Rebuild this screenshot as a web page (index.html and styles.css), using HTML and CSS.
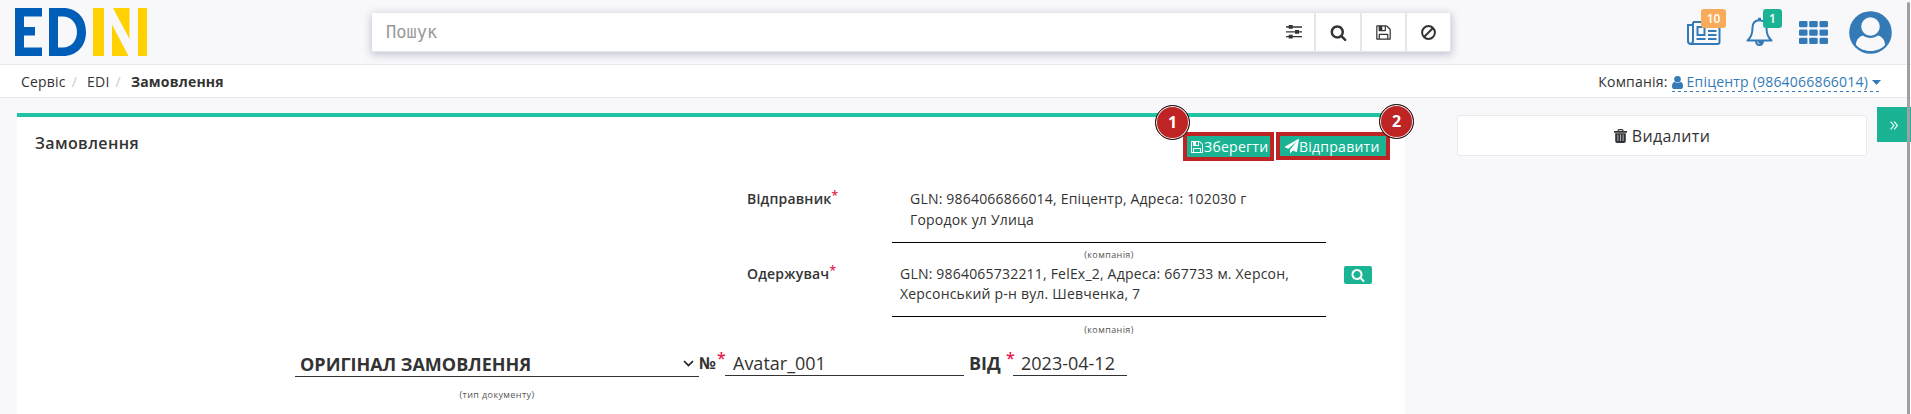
FILE: index.html
```html
<!DOCTYPE html>
<html lang="uk">
<head>
<meta charset="utf-8">
<title>Замовлення</title>
<link rel="stylesheet" href="styles.css">
</head>
<body>
<svg class="defs" aria-hidden="true">
  <symbol id="search" viewBox="0 0 1792 1792"><path d="M1216 832q0-185-131.500-316.500t-316.500-131.500-316.500 131.500-131.500 316.500 131.500 316.500 316.500 131.500 316.500-131.500 131.500-316.500zm512 832q0 52-38 90t-90 38q-54 0-90-38l-343-342q-179 124-399 124-143 0-273.500-55.500t-225-150-150-225-55.500-273.500 55.500-273.500 150-225 225-150 273.500-55.500 273.500 55.500 225 150 150 225 55.500 273.500q0 220-124 399l343 343q37 37 37 90z"/></symbol>
  <symbol id="save" viewBox="0 0 1792 1792"><path d="M512 1536h768v-384h-768v384zm896 0h128v-896q0-14-10-38.500t-20-34.500l-281-281q-10-10-34-20t-39-10v416q0 40-28 68t-68 28h-576q-40 0-68-28t-28-68v-416h-128v1280h128v-416q0-40 28-68t68-28h832q40 0 68 28t28 68v416zm-384-928v-320q0-13-9.500-22.500t-22.500-9.500h-192q-13 0-22.500 9.500t-9.500 22.500v320q0 13 9.500 22.500t22.500 9.500h192q13 0 22.500-9.500t9.500-22.500zm640 32v928q0 40-28 68t-68 28h-1344q-40 0-68-28t-28-68v-1344q0-40 28-68t68-28h928q40 0 88 20t76 48l280 280q28 28 48 76t20 88z"/></symbol>
</svg>
<header class="header">
  <svg class="logo" viewBox="0 0 132 48" role="img" aria-label="EDIN">
    <path fill="#005eb8" d="M0 0h27v8.500H9V19h11v8.500H9v12h18V48H0z"/>
    <path fill="#005eb8" fill-rule="evenodd" d="M34 0h14c14 0 23 10 23 24s-9 24-23 24H34zM43 8.500v31h5c8 0 14-6.500 14-15.500S56 8.500 48 8.500z"/>
    <path fill="#ffd100" d="M78 0h11v48H78zM98 0h16.500v31zM97 16.500L113.500 48H97zM123 0h9v48h-9z"/>
  </svg>
  <div class="search">
    <span class="search-hint">Пошук</span>
    <span class="search-opts"><svg width="16" height="14" viewBox="0 0 16 14"><path d="M0 2h16M0 6.800h16M0 11.600h16" stroke="#333" stroke-width="1.300"/><path d="M2.700 0h4v3.800h-4zM9 4.900h4v3.800H9zM2.700 9.700h4v3.800h-4z" fill="#333"/></svg></span>
    <span class="search-btn b1"><svg class="ic17"><use href="#search"/></svg></span>
    <span class="search-btn b2"><svg class="ic17"><use href="#save"/></svg></span>
    <span class="search-btn b3"><svg width="15" height="15" viewBox="0 0 15 15" fill="none" stroke="#333" stroke-width="2"><circle cx="7.500" cy="7.500" r="6.400"/><path d="M3 12L12 3"/></svg></span>
  </div>
  <nav class="tools">
    <span class="tool news">
      <svg width="34" height="24" viewBox="0 0 34 24" fill="none" stroke="#337ab7" stroke-width="2"><path d="M6 1h26.500v20q0 2-2 2H4q-3 0-3-3V4h4.500"/><path d="M6 1v19q0 2.500-2.300 2.500"/><path d="M10.500 6h7v8h-7zM9.500 18h9M21 10h8.500M21 14h8.500M21 18h8.500"/></svg>
      <b class="badge orange">10</b>
    </span>
    <span class="tool bell">
      <svg width="27" height="30" viewBox="0 0 27 30"><path d="M13.500 3.200c-4.800 0-7 3.300-7 7.600 0 6.700-2 10.200-5 12.700h24c-3-2.500-5-6-5-12.700 0-4.300-2.200-7.600-7-7.600z" fill="none" stroke="#337ab7" stroke-width="2" stroke-linejoin="round"/><path d="M12 .8h3v2.400h-3zM9 24h9q-.3 5-4.500 5T9 24z" fill="#337ab7"/><path d="M11.400 24.500q.2 2.200 2.200 2.300" fill="none" stroke="#f8f8fb" stroke-width=".8"/></svg>
      <b class="badge green">1</b>
    </span>
    <svg class="grid" width="29" height="23" viewBox="0 0 29 23" fill="#337ab7"><rect width="8.500" height="6.300" rx="1.300"/><rect x="10.200" width="8.500" height="6.300" rx="1.300"/><rect x="20.500" width="8.500" height="6.300" rx="1.300"/><rect y="8.400" width="8.500" height="6.300" rx="1.300"/><rect x="10.200" y="8.400" width="8.500" height="6.300" rx="1.300"/><rect x="20.500" y="8.400" width="8.500" height="6.300" rx="1.300"/><rect y="16.700" width="8.500" height="6.300" rx="1.300"/><rect x="10.200" y="16.700" width="8.500" height="6.300" rx="1.300"/><rect x="20.500" y="16.700" width="8.500" height="6.300" rx="1.300"/></svg>
    <svg class="avatar" width="43" height="43" viewBox="0 0 43 43"><circle cx="21.500" cy="21.500" r="21.300" fill="#337ab7"/><path d="M14 24.500c-4 1-7 4.500-7 9.500 3.200 3.700 8.500 6 14.500 6s11.300-2.300 14.500-6c0-5-3-8.500-7-9.500-2 1.500-4.700 2.400-7.500 2.400s-5.500-.9-7.500-2.400z" fill="#f8f8fb"/><circle cx="21.500" cy="15.500" r="9.300" fill="#f8f8fb"/></svg>
  </nav>
</header>
<div class="crumbs">
  <span class="c1">Сервіс</span><i class="s1">/</i><span class="c2">EDI</span><i class="s2">/</i><b class="c3">Замовлення</b>
  <div class="company"><span>Компанія:</span>
    <a class="company-link"><svg width="11" height="13" viewBox="256 128 1280 1536" preserveAspectRatio="none" fill="#337ab7"><path d="M1536 1399q0 109-62.500 187t-150.500 78h-854q-88 0-150.500-78t-62.500-187q0-85 8.500-160.500t31.500-152 58.500-131 94-89 134.500-34.500q131 128 313 128t313-128q76 0 134.500 34.500t94 89 58.500 131 31.500 152 8.500 160.500z"/><circle cx="896" cy="512" r="384"/></svg><span class="company-name">Епіцентр (9864066866014)</span><svg class="caret" width="9" height="5" viewBox="0 0 9 5"><path d="M0 0h9L4.500 5z" fill="#337ab7"/></svg></a>
  </div>
</div>
<main class="main">
  <section class="card">
    <div class="card-head">
      <h1>Замовлення</h1>
      <div class="actions">
        <div class="action a1"><svg class="ic14"><use href="#save"/></svg><span>Зберегти</span><em class="mark m1">1</em></div>
        <div class="action a2"><svg width="14" height="14" viewBox="0 0 1792 1792" fill="#fff"><path d="M1764 11q33 24 27 64l-256 1536q-5 29-32 45-14 8-31 8-11 0-24-5l-453-185-242 295q-18 23-49 23-13 0-22-4-19-7-30.500-23.500t-11.500-36.500v-349l864-1059-1069 925-395-162q-37-14-40-55-2-40 32-59l1664-960q15-9 32-9 20 0 36 11z"/></svg><span>Відправити</span><em class="mark m2">2</em></div>
      </div>
    </div>
    <div class="party p1">
      <label>Відправник<sup>*</sup></label>
      <div class="party-field"><div class="party-text">GLN: 9864066866014, Епіцентр, Адреса: 102030 г<br>Городок ул Улица</div><small>(компанія)</small></div>
    </div>
    <div class="party p2">
      <label>Одержувач<sup>*</sup></label>
      <div class="party-field"><div class="party-text">GLN: 9864065732211, FelEx_2, Адреса: 667733 м. Херсон,<br>Херсонський р-н вул. Шевченка, 7</div><small>(компанія)</small></div>
      <span class="find"><svg class="ic14"><use href="#search"/></svg></span>
    </div>
    <div class="doc">
      <div class="doc-type"><div class="select"><b>ОРИГІНАЛ ЗАМОВЛЕННЯ</b><svg width="11" height="7" viewBox="0 0 11 7"><path d="M1 1l4.500 4.500L10 1" fill="none" stroke="#222" stroke-width="1.700"/></svg></div><small>(тип документу)</small></div>
      <b class="num">№</b><sup class="st1">*</sup><span class="input i1">Avatar_001</span>
      <b class="from">ВІД</b><sup class="st2">*</sup><span class="input i2">2023-04-12</span>
    </div>
  </section>
  <aside class="side"><div class="delete"><svg width="13" height="14" viewBox="0 0 13 14"><path d="M0 2h13v1.700H0zM1.200 4.200h10.600V12q0 2-2 2H3.200q-2 0-2-2z" fill="#333"/><path d="M4 2q0-1.300 1-1.300h3q1 0 1 1.300" fill="none" stroke="#333" stroke-width="1.200"/><path d="M3.900 5.500v6.500M6.500 5.500v6.500M9.100 5.500v6.500" stroke="#aab6c4" stroke-width="1"/></svg><span>Видалити</span></div></aside>
</main>
<div class="toggle"><svg width="8" height="9" viewBox="0 0 8 9"><path d="M.6.700l3.300 3.800L.6 8.300M4.100.700l3.300 3.800-3.300 3.800" fill="none" stroke="#fff" stroke-width="1.100"/></svg></div>
<div class="scrollbar"></div>
</body>
</html>
```
FILE: styles.css
```css
* { box-sizing: border-box; }
body { margin: 0; width: 1911px; height: 414px; overflow: hidden; position: relative; background: #f8f8fb; color: #333; font: 14px/20px "Open Sans", "Noto Sans", sans-serif; letter-spacing: .2px; }
svg { display: block; flex: none; }
b { font-weight: 700; }
small { display: block; font-size: 9px; line-height: 12px; text-align: center; color: #555; letter-spacing: .4px; }
sup { color: #e6194b; line-height: 1; vertical-align: baseline; }
.defs { position: absolute; width: 0; height: 0; }
.ic17 { width: 17px; height: 17px; fill: #333; }
.ic14 { width: 14px; height: 14px; fill: #fff; }
.header { height: 65px; border-bottom: 1px solid #e7eaec; display: flex; align-items: flex-start; }
.logo { width: 132px; height: 48px; margin: 8px 0 0 15px; }
.search { display: flex; width: 1079px; height: 39px; margin: 13px 0 0 225px; background: #fff; border-right: 1px solid #e3e5e8; border-bottom: 1px solid #e3e6ea; box-shadow: 0 2px 8px 1px rgba(60, 65, 105, .28); align-items: stretch; }
.search-hint { flex: 1; padding: 9px 0 0 14px; font: 17px/20px "DejaVu Sans Mono", monospace; letter-spacing: 0; color: #999; }
.search-opts, .search-btn { display: flex; align-items: center; justify-content: center; }
.search-opts { width: 40px; }
.search-btn { border-left: 2px solid #e5e6e8; }
.b1 { width: 46px; } .b2 { width: 45px; } .b3 { width: 45px; }
.tools { display: flex; align-items: flex-start; padding-left: 236px; }
.tool { position: relative; }
.news { margin-top: 21px; }
.bell { margin: 17px 0 0 25px; }
.grid { margin: 21px 0 0 26px; }
.avatar { margin: 11px 0 0 21px; }
.badge { position: absolute; height: 19px; border-radius: 3px; color: #fff; font-size: 12px; line-height: 19px; font-weight: 600; text-align: center; letter-spacing: 0; }
.orange { left: 14px; top: -12px; width: 25px; background: #f8ac59; }
.green { left: 17px; top: -8px; width: 19px; background: #1ab394; }
.crumbs { height: 33px; background: #fff; border-bottom: 1px solid #e7eaec; display: flex; padding: 7px 30px 0 21px; }
.crumbs i { font-style: normal; color: #ccc; }
.s1 { margin: 0 10px 0 6px; } .s2 { margin: 0 10px 0 6px; }
.company { margin-left: auto; display: flex; }
.company-link { display: flex; align-items: flex-start; height: 20px; margin-left: 4px; background: repeating-linear-gradient(90deg, #337ab7 0 3px, transparent 3px 6px) left bottom / 100% 1px no-repeat; color: #337ab7; }
.company-link svg { margin-top: 4px; }
.company-name { margin: 0 4px; }
.company-link .caret { margin-top: 8px; }
.main { display: flex; padding: 15px 0 0 17px; align-items: flex-start; }
.card { width: 1388px; height: 301px; background: #fff; border-top: 4px solid #1fc5a3; }
.card-head { display: flex; justify-content: space-between; height: 58px; padding: 15px 15px 0 18px; }
h1 { margin: 0; padding-top: 1px; font-size: 16px; line-height: 20px; font-weight: 600; letter-spacing: .4px; }
.actions { display: flex; gap: 2px; align-items: flex-start; }
.action { position: relative; display: flex; align-items: center; background: #1ab394; border: 4px solid #bf2424; color: #fff; padding-left: 3px; line-height: 20px; white-space: nowrap; }
.action span { padding-top: 1px; letter-spacing: .25px; }
.a1 { width: 91px; height: 29px; } .a2 { width: 114px; height: 28px; padding-left: 5px; }
.mark { position: absolute; width: 35px; height: 35px; border-radius: 50%; background: #bf2424; border: 1.500px solid #111; box-shadow: inset 0 0 0 1px #eee; color: #fff; font: 700 16px/32px "Open Sans", sans-serif; letter-spacing: 0; text-align: center; }
.m1 { left: -32px; top: -31px; } .m2 { left: 99px; top: -32px; }
.party { display: flex; align-items: flex-start; padding-left: 730px; height: 75px; padding-top: 14px; }
.party label { width: 145px; font-weight: 600; }
.party label sup { position: relative; top: -4px; font-size: 12px; }
.party-field { width: 434px; }
.party-text { line-height: 20.500px; border-bottom: 1px solid #000; white-space: nowrap; }
.p1 .party-text { height: 54px; padding-left: 18px; }
.p2 .party-text { height: 53px; padding-left: 8px; line-height: 20px; }
.party small { margin-top: 6px; }
.p2 small { margin-top: 7px; }
.find { display: flex; align-items: center; justify-content: center; width: 28px; height: 18px; margin: 2px 0 0 18px; background: #1ab394; border-radius: 2px; }
.doc { display: flex; align-items: flex-start; padding: 26px 0 0 278px; font-size: 18px; line-height: 24px; letter-spacing: 0; }
.doc-type { width: 404px; }
.select { display: flex; justify-content: space-between; align-items: center; height: 26px; padding: 0 5px; border-bottom: 1px solid #333; }
.doc-type small { margin-top: 12px; }
.doc sup { font-size: 16px; font-weight: 600; line-height: 20px; margin-top: -3px; }
.st1 { width: 8px; } .st2 { width: 7px; }
.num { width: 18px; font-size: 16.500px; }
.input { height: 25px; border-bottom: 1px solid #333; padding-left: 8px; }
.i1 { width: 239px; } .i2 { width: 114px; }
.from { width: 37px; margin-left: 5px; }
.side { padding: 2px 0 0 52px; }
.delete { display: flex; align-items: center; justify-content: center; gap: 5px; width: 410px; height: 41px; background: #fff; border: 1px solid #e7eaec; border-radius: 3px; font-size: 16px; letter-spacing: .35px; }
.toggle { position: absolute; left: 1877px; top: 107px; width: 34px; height: 35px; background: #1ab394; padding: 14px 0 0 13px; }
.scrollbar { position: absolute; left: 1907px; top: 2px; width: 3px; height: 412px; background: #a0a0a0; border-radius: 2px 2px 0 0; }
```
